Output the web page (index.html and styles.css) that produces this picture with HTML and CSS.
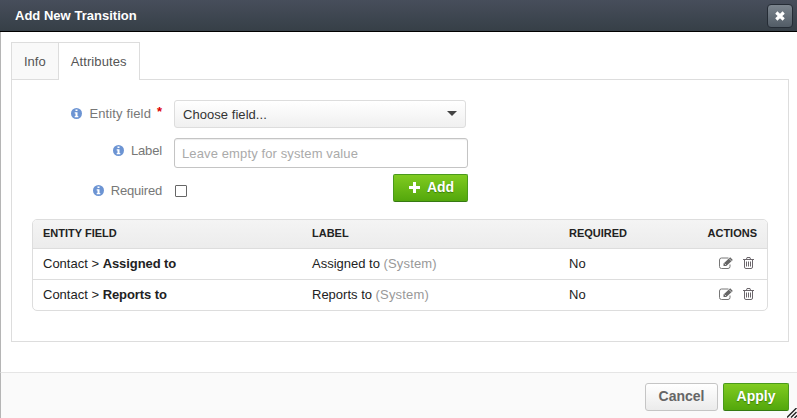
FILE: index.html
```html
<!DOCTYPE html>
<html lang="en">
<head>
<meta charset="utf-8">
<title>Add New Transition</title>
<link rel="stylesheet" href="styles.css">
</head>
<body>
<svg width="0" height="0" class="defs">
  <symbol id="info" viewBox="0 0 11 11"><circle cx="5.5" cy="5.5" r="5.5" fill="#6c94d3"/><path d="M4.5 1.5h2v1.6h-2zM3.7 4.2h2.8v3.8h.8v1.2H3.7V8h.8V5.4h-.8z" fill="#fff"/></symbol>
  <symbol id="edit" viewBox="0 0 14 12"><path d="M9.5 1H2.5Q.5 1 .5 3v6.5q0 2 2 2h6.500q2 0 2-2V7.500" fill="none" stroke="#777" stroke-width="1"/><path d="M4.500 6.500 11.200.3 13.800 2.900 7.300 9H4.500z" fill="#666"/><path d="M5.600 6.600 7.100 8.100M10.200 1.700l2.200 2.200" stroke="#fff" stroke-width=".7"/></symbol>
  <symbol id="trash" viewBox="0 0 11 12"><path d="M0 2.500h11M3.500 2.200 4 .5h3l.5 1.700M1.500 2.500v7.500q0 1.500 1.400 1.500h5.200q1.400 0 1.400-1.500V2.500M3.500 4.500v5M5.500 4.500v5M7.500 4.500v5" fill="none" stroke="#6b666b" stroke-width="1"/></symbol>
</svg>
<div class="dialog">
  <header class="titlebar">
    <h1>Add New Transition</h1>
    <button class="close" aria-label="Close"><svg width="10" height="10" viewBox="0 0 10 10"><path d="M1.300 1.500 8.700 8.500M8.700 1.500 1.300 8.500" stroke="#fff" stroke-width="3.100"/></svg></button>
  </header>
  <main class="content">
    <nav class="tabs"><a class="tab">Info</a><a class="tab active">Attributes</a></nav>
    <section class="panel">
      <div class="form">
        <div class="row field-row">
          <div class="label"><svg class="info"><use href="#info"/></svg><span>Entity field</span><em>*</em></div>
          <div class="select"><span>Choose field...</span><i class="caret"></i></div>
        </div>
        <div class="row label-row">
          <div class="label"><svg class="info"><use href="#info"/></svg><span>Label</span></div>
          <input type="text" class="text" placeholder="Leave empty for system value">
        </div>
        <div class="row required-row">
          <div class="label"><svg class="info"><use href="#info"/></svg><span>Required</span></div>
          <input type="checkbox" class="check">
          <button class="btn primary add"><svg width="11" height="11" viewBox="0 0 11 11"><path d="M4 0h3v4h4v3H7v4H4V7H0V4h4z" fill="#fff"/></svg>Add</button>
        </div>
      </div>
      <div class="table">
        <div class="tr head"><span>ENTITY FIELD</span><span>LABEL</span><span>REQUIRED</span><span class="last">ACTIONS</span></div>
        <div class="tr"><span>Contact &gt; <b>Assigned to</b></span><span>Assigned to <small>(System)</small></span><span>No</span><span class="actions"><svg width="14" height="12"><use href="#edit"/></svg><svg width="11" height="12"><use href="#trash"/></svg></span></div>
        <div class="tr"><span>Contact &gt; <b>Reports to</b></span><span>Reports to <small>(System)</small></span><span>No</span><span class="actions"><svg width="14" height="12"><use href="#edit"/></svg><svg width="11" height="12"><use href="#trash"/></svg></span></div>
      </div>
    </section>
  </main>
  <footer class="footer">
    <button class="btn cancel">Cancel</button>
    <button class="btn primary apply">Apply</button>
  </footer>
  <svg class="grip" width="10" height="10" viewBox="0 0 10 10"><path d="M0 9.500 9.500 0M4 9.500 9.500 4M7.500 10 10 7.500" stroke="#222" stroke-width="1.400"/></svg>
</div>
</body>
</html>
```

FILE: styles.css
```css
* { box-sizing: border-box; }
body {
  margin: 0;
  font: 13px/20px "Liberation Sans", Arial, sans-serif;
  color: #222;
}
button { font-family: inherit; padding: 0; }
svg { display: block; }
.defs { position: absolute; }
.dialog {
  position: relative;
  display: flex;
  flex-direction: column;
  height: 418px;
  background: #fff;
  overflow: hidden;
}
.titlebar {
  display: flex;
  justify-content: space-between;
  align-items: center;
  height: 32px;
  flex: none;
  padding: 0 4px 0 15px;
  background: linear-gradient(#474e5b, #363f47);
  border-bottom: 1px solid #000;
}
h1 { margin: 0; font-size: 13px; line-height: 20px; letter-spacing: .02px; color: #fff; }
.close {
  display: flex;
  align-items: center;
  justify-content: center;
  width: 26px;
  height: 24px;
  border: 1px solid #252c35;
  border-radius: 4px;
  background: linear-gradient(#7c858e, #525c66);
}
.content {
  flex: 1;
  padding: 10px 8px 30px 10px;
  border-left: 1px solid #b5b5b5;
}
.tabs { display: flex; height: 38px; }
.tab {
  height: 38px;
  padding: 0 12px;
  border: 1px solid #ddd;
  border-right: 0;
  background: #f9f9f9;
  color: #555;
  line-height: 38px;
}
.tab.active {
  width: 82px;
  letter-spacing: .1px;
  border-right: 1px solid #ddd;
  border-bottom: 0;
  background: #fff;
  position: relative;
}
.panel {
  height: 263px;
  margin-top: -1px;
  padding: 20px;
  border: 1px solid #ddd;
}
.form { height: 119px; }
.row { display: flex; }
.label {
  display: flex;
  justify-content: flex-end;
  width: 130px;
  margin-right: 12px;
  color: #777;
}
.info { width: 11px; height: 11px; margin: 4px 7px 0 0; }
.label em {
  width: 5px;
  margin-left: 6px;
  color: #d00;
  font-style: normal;
  font-weight: bold;
  line-height: 16px;
}
.field-row { height: 38px; }
.field-row .label { margin-top: 4px; }
.field-row .label span { letter-spacing: .13px; }
.select {
  display: flex;
  justify-content: space-between;
  width: 292px;
  height: 28px;
  padding: 4px 8px;
  border: 1px solid #ddd;
  border-radius: 3px;
  background: linear-gradient(#fff, #f0f0f0);
  color: #333;
  letter-spacing: .05px;
}
.caret {
  height: 0;
  margin-top: 6px;
  border: 5px solid transparent;
  border-top-color: #444;
  border-bottom: 0;
}
.label-row { height: 36px; }
.label-row .label { margin-top: 3px; letter-spacing: -.15px; }
.text {
  width: 294px;
  height: 30px;
  padding: 1px 7px 0;
  border: 1px solid #c4c4c4;
  border-radius: 3px;
  box-shadow: inset 0 1px 1px #eee;
  font: inherit;
  letter-spacing: .12px;
}
.text::placeholder { color: #aaa; }
.required-row .label { margin-top: 7px; letter-spacing: -.2px; }
.check {
  appearance: none;
  width: 12px;
  height: 12px;
  margin: 11px 0 0 1px;
  border: 1px solid #666;
  border-radius: 1px;
  background: #fff;
}
.btn {
  height: 28px;
  padding-bottom: 2px;
  border: 1px solid #c5c5c5;
  border-radius: 3px;
  background: linear-gradient(#fff, #ebebeb);
  color: #666;
  font-size: 14px;
  font-weight: bold;
  line-height: 24px;
}
.primary {
  border-color: #4a9a1b;
  border-bottom-color: #367a12;
  border-radius: 2px;
  background: linear-gradient(#80cb20, #53a70c);
  color: #fff;
  text-shadow: 0 1px 1px #387f08;
}
.add {
  display: flex;
  align-items: center;
  justify-content: center;
  gap: 7px;
  width: 75px;
  padding-left: 2px;
  margin-left: 206px;
}
.table {
  border: 1px solid #ddd;
  border-radius: 5px;
  overflow: hidden;
}
.tr {
  display: grid;
  grid-template-columns: 269px 257px 1fr 60px;
  height: 31px;
  padding: 5px 10px 0;
  border-top: 1px solid #ddd;
}
.tr b { letter-spacing: -.08px; }
.head {
  height: 28px;
  padding-top: 3px;
  border-top: 0;
  background: linear-gradient(#f4f4f4, #ececec);
  font-size: 11px;
  font-weight: bold;
}
.last { text-align: right; }
.tr small { font-size: inherit; color: #999; letter-spacing: .16px; }
.actions {
  display: flex;
  justify-content: flex-end;
  gap: 10px;
  padding: 3px 3px 0 0;
}
.footer {
  display: flex;
  justify-content: flex-end;
  gap: 5px;
  height: 46px;
  padding: 10px 8px 0 0;
  border-top: 1px solid #e5e5e5;
  border-left: 1px solid #b5b5b5;
  background: #fafafa;
}
.cancel { width: 73px; }
.apply { width: 66px; }
.grip { position: absolute; right: 0; bottom: 0; }
```
